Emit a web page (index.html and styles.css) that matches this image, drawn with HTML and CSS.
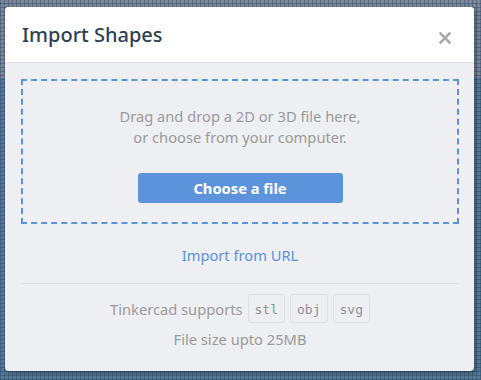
FILE: index.html
```html
<!DOCTYPE html>
<html lang="en">
<head>
  <meta charset="UTF-8">
  <title>Import Shapes</title>
  <link rel="stylesheet" href="styles.css">
</head>
<body>

  <div class="modal">
    <div class="modal-header">
      <h2>Import Shapes</h2>
      <svg class="cerrar" width="12" height="12" viewBox="0 0 12 12">
        <path d="M1.5 1.5 L10.5 10.5 M10.5 1.5 L1.5 10.5" stroke="#aaa" stroke-width="2.6" stroke-linecap="square"/>
      </svg>
    </div>

    <div class="modal-body">
      <div class="dropzone">
        <p>Drag and drop a 2D or 3D file here,<br>or choose from your computer.</p>
        <button class="elegir">Choose a file</button>
      </div>

      <a href="#" class="url">Import from URL</a>

      <div class="soporte">
        <div class="formatos">
          Tinkercad supports
          <code>stl</code>
          <code>obj</code>
          <code>svg</code>
        </div>
        <div class="tamano">File size upto 25MB</div>
      </div>
    </div>
  </div>

</body>
</html>
```

FILE: styles.css
```css
body {
  margin: 0;
  height: 380px;
  font-family: 'Noto Sans', 'Open Sans', sans-serif;
  background-color: #7b8699;
  background-image:
    repeating-linear-gradient(90deg, rgba(30,60,90,0.35) 0 1px, transparent 1px 4px),
    repeating-linear-gradient(0deg, rgba(30,60,90,0.35) 0 1px, transparent 1px 4px),
    linear-gradient(#7b8699 0 78px, #557995 78px);
  overflow: hidden;
  padding-top: 7px;
  box-sizing: border-box;
}

.modal {
  margin-left: 5px;
  width: 469px;
  height: 364px;
  border-radius: 4px;
  overflow: hidden;
  background-color: #eeeff3;
  box-shadow: 2px 2px 4px rgba(0,0,0,0.35);
}

.modal-header {
  height: 55px;
  background-color: #fff;
  border-bottom: 1px solid #dde0e6;
  display: flex;
  align-items: center;
  justify-content: space-between;
  padding: 0 23px 0 17px;
}

.modal-header h2 {
  margin: 0;
  font-size: 20px;
  font-weight: 500;
  color: #2e3f52;
}

.cerrar {
  margin-top: 6px;
}

.modal-body {
  padding: 16px 15px 0 16px;
  text-align: center;
  font-size: 14.7px;
}

.dropzone {
  height: 116px;
  border: 2px dashed #5b93db;
  padding-top: 25px;
}

.dropzone p {
  margin: 0;
  line-height: 21px;
  color: #9a9a9a;
}

.elegir {
  margin-top: 25px;
  width: 205px;
  height: 30px;
  background-color: #5b94db;
  color: white;
  border: none;
  border-radius: 3px;
  font-family: inherit;
  font-size: 14.7px;
  font-weight: bold;
}

.url {
  display: block;
  margin-top: 20px;
  line-height: 22px;
  color: #5b8fd9;
  text-decoration: none;
}

.soporte {
  margin-top: 17px;
  border-top: 1px solid #dcdee3;
  padding-top: 10px;
  color: #9a9a9a;
}

.formatos {
  display: flex;
  justify-content: center;
  align-items: center;
  gap: 5px;
}

.formatos code {
  font-family: 'DejaVu Sans Mono', monospace;
  font-size: 13px;
  color: #8f8f8f;
  border: 1px solid #dfe0e4;
  border-radius: 3px;
  padding: 0 6px;
  height: 29px;
  line-height: 29px;
  box-sizing: border-box;
}

.tamano {
  margin-top: 6px;
  line-height: 20px;
}
```
